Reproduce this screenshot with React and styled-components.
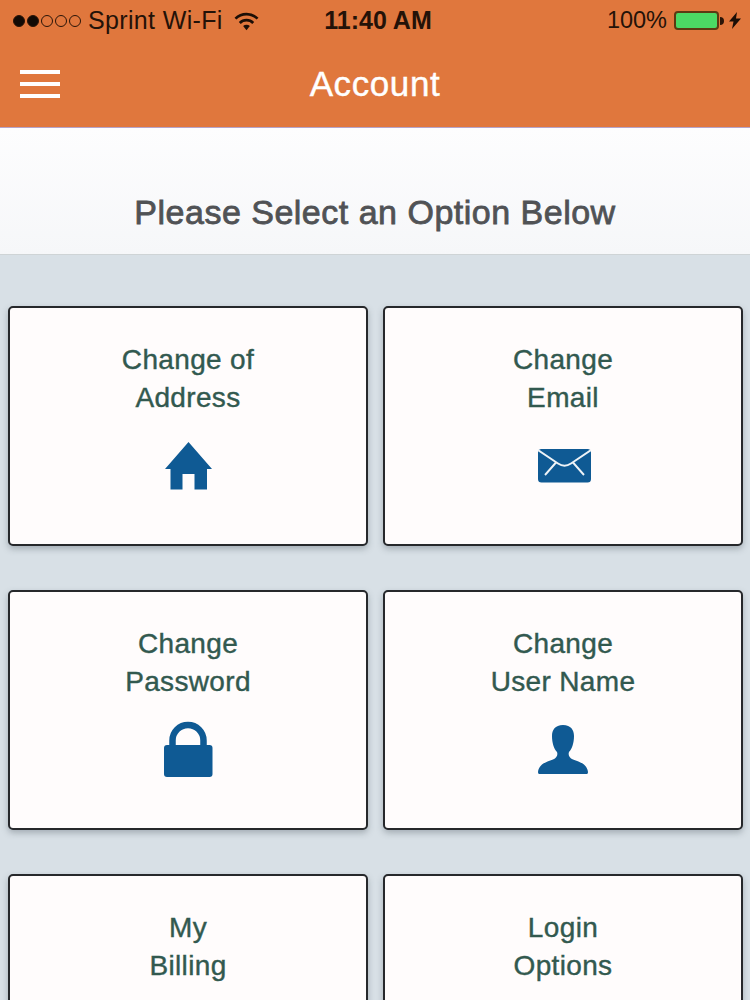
import styled, { createGlobalStyle } from "styled-components";

const GlobalStyle = createGlobalStyle`
  html, body {
    margin: 0;
    padding: 0;
    height: 1000px;
    overflow: hidden;
    background: #d8e0e6;
    font-family: "Liberation Sans", Arial, sans-serif;
  }
`;

const Page = styled.div`
  width: 750px;
  height: 1000px;
  overflow: hidden;
  background: #d8e0e6;
`;

const Header = styled.header`
  height: 127px;
  background: #e0773d;
  border-bottom: 1px solid #b5a3c9;
`;

const StatusBar = styled.div`
  height: 41px;
  position: relative;
  display: flex;
  align-items: center;
  justify-content: space-between;
  padding: 0 9px 0 13px;
  color: #241208;
`;

const Carrier = styled.div`
  display: flex;
  align-items: center;
  font-size: 25px;
  letter-spacing: 0.35px;
`;

const Signal = styled.div`
  display: flex;
  gap: 2px;
  margin-right: 7px;
`;

const Dot = styled.span`
  width: 12px;
  height: 12px;
  box-sizing: border-box;
  border-radius: 50%;
  border: 1px solid #2b1508;
  background: ${(p) => (p.$on ? "#120a05" : "transparent")};
`;

const Time = styled.div`
  position: absolute;
  left: 6px;
  right: 0;
  text-align: center;
  font-size: 25px;
  font-weight: 700;
  pointer-events: none;
`;

const Power = styled.div`
  display: flex;
  align-items: center;
  font-size: 23.5px;
`;

const Battery = styled.div`
  width: 45px;
  height: 19px;
  box-sizing: border-box;
  margin-left: 7px;
  border: 2px solid #5c3a12;
  border-radius: 4px;
  background: #4cd964;
`;

const NavBar = styled.div`
  height: 86px;
  display: flex;
  align-items: center;
  justify-content: center;
  position: relative;
  box-sizing: border-box;
`;

const Menu = styled.div`
  position: absolute;
  left: 20px;
  top: 29px;
  width: 40px;
  display: flex;
  flex-direction: column;
  gap: 8px;
`;

const MenuLine = styled.span`
  height: 4px;
  background: #fff;
`;

const Title = styled.h1`
  margin: 0;
  color: #fff;
  font-size: 35px;
  font-weight: 400;
  letter-spacing: 0.6px;
  -webkit-text-stroke: 0.4px #fff;
`;

const SubHeader = styled.div`
  height: 127px;
  box-sizing: border-box;
  background: linear-gradient(#fdfdfe, #f6f7f9);
  border-bottom: 1px solid #cfd4d6;
  display: flex;
  align-items: flex-end;
  justify-content: center;
  padding-bottom: 23px;
`;

const Prompt = styled.h2`
  margin: 0;
  color: #505255;
  font-size: 34px;
  line-height: 38px;
  font-weight: 400;
  letter-spacing: 0.5px;
  -webkit-text-stroke: 0.8px #505255;
`;

const Grid = styled.div`
  display: grid;
  grid-template-columns: 360px 360px;
  grid-auto-rows: 240px;
  column-gap: 15px;
  row-gap: 44px;
  padding: 51px 0 0 8px;
`;

const Card = styled.div`
  box-sizing: border-box;
  background: #fffcfc;
  border: 2px solid #26282b;
  border-radius: 5px;
  box-shadow: 0 3px 6px rgba(70, 80, 90, 0.35);
  display: flex;
  flex-direction: column;
  align-items: center;
  padding-top: 33px;
`;

const Label = styled.div`
  color: #32594f;
  font-size: 28px;
  line-height: 38px;
  letter-spacing: 0.35px;
  text-align: center;
  -webkit-text-stroke: 0.4px #32594f;
`;

const IconSlot = styled.div`
  height: 64px;
  margin-top: 17px;
  display: flex;
  align-items: center;
  justify-content: center;
  color: #0f5a94;
`;

const Glyph = styled.svg`
  margin-left: ${(p) => p.$left || 0}px;
`;

const Wifi = () => (
  <Glyph $left={11} width="25" height="20" viewBox="0 0 26 20">
    <g fill="none" stroke="#1b0e06" strokeWidth="2.8">
      <path d="M1.500 7.500a16.500 16.500 0 0 1 23 0" />
      <path d="M6 12a10 10 0 0 1 14 0" />
    </g>
    <path d="M9.500 15.200a5 5 0 0 1 7 0L13 19.500z" fill="#1b0e06" />
  </Glyph>
);

const Nub = () => (
  <Glyph $left={1} width="4" height="8" viewBox="0 0 4 8">
    <path d="M0 0a4 4 0 0 1 0 8z" fill="#2b1508" />
  </Glyph>
);

const Bolt = () => (
  <Glyph $left={5} width="12" height="17" viewBox="0 0 12 17">
    <path d="M8 0 0 9.500h4.500L3 17l9-10.500H7z" fill="#1b0e06" />
  </Glyph>
);

const House = () => (
  <Glyph width="47" height="48" viewBox="0 0 47 48">
    <path
      d="M23.500 0 47 27H42V47.500H29.500V32H17.500V47.500H5.500V27H0z"
      fill="currentColor"
    />
  </Glyph>
);

const Envelope = () => (
  <Glyph $left={3} width="53" height="34" viewBox="0 0 53 34">
    <rect width="53" height="33.500" rx="3.500" fill="currentColor" />
    <path
      d="M0 1 20 14.500Q26.500 19 33 14.500L53 1M18 13.500 7 26M35 13.500 46 26"
      fill="none"
      stroke="#eef3f7"
      strokeWidth="1.900"
    />
  </Glyph>
);

const Lock = () => (
  <Glyph width="50" height="58" viewBox="0 0 50 58">
    <path
      d="M9.500 24V19.500a15.500 15.500 0 0 1 31 0V24"
      fill="none"
      stroke="currentColor"
      strokeWidth="6.500"
    />
    <rect x="1" y="24" width="48.500" height="32" rx="3" fill="currentColor" />
  </Glyph>
);

const User = () => (
  <Glyph width="50" height="50" viewBox="0 0 50 50">
    <path
      d="M25 0C17 0 14 5 14 11C14 18 16 24 19 27C20 30 19 33 15 34.500C8 37 1 39 0 47C0 49 1 49 2 49H48C49 49 50 49 50 47C49 39 42 37 35 34.500C31 33 30 30 31 27C34 24 36 18 36 11C36 5 33 0 25 0z"
      fill="currentColor"
    />
  </Glyph>
);

const options = [
  { lines: ["Change of", "Address"], icon: <House /> },
  { lines: ["Change", "Email"], icon: <Envelope /> },
  { lines: ["Change", "Password"], icon: <Lock /> },
  { lines: ["Change", "User Name"], icon: <User /> },
  { lines: ["My", "Billing"] },
  { lines: ["Login", "Options"] },
];

const App = () => {
  return (
    <Page>
      <GlobalStyle />
      <Header>
        <StatusBar>
          <Carrier>
            <Signal>
              <Dot $on />
              <Dot $on />
              <Dot />
              <Dot />
              <Dot />
            </Signal>
            Sprint Wi-Fi
            <Wifi />
          </Carrier>
          <Time>11:40 AM</Time>
          <Power>
            100%
            <Battery />
            <Nub />
            <Bolt />
          </Power>
        </StatusBar>
        <NavBar>
          <Menu>
            <MenuLine />
            <MenuLine />
            <MenuLine />
          </Menu>
          <Title>Account</Title>
        </NavBar>
      </Header>
      <SubHeader>
        <Prompt>Please Select an Option Below</Prompt>
      </SubHeader>
      <Grid>
        {options.map((o) => (
          <Card key={o.lines.join(" ")}>
            <Label>
              {o.lines[0]}
              <br />
              {o.lines[1]}
            </Label>
            {o.icon && <IconSlot>{o.icon}</IconSlot>}
          </Card>
        ))}
      </Grid>
    </Page>
  );
};

export default App;
